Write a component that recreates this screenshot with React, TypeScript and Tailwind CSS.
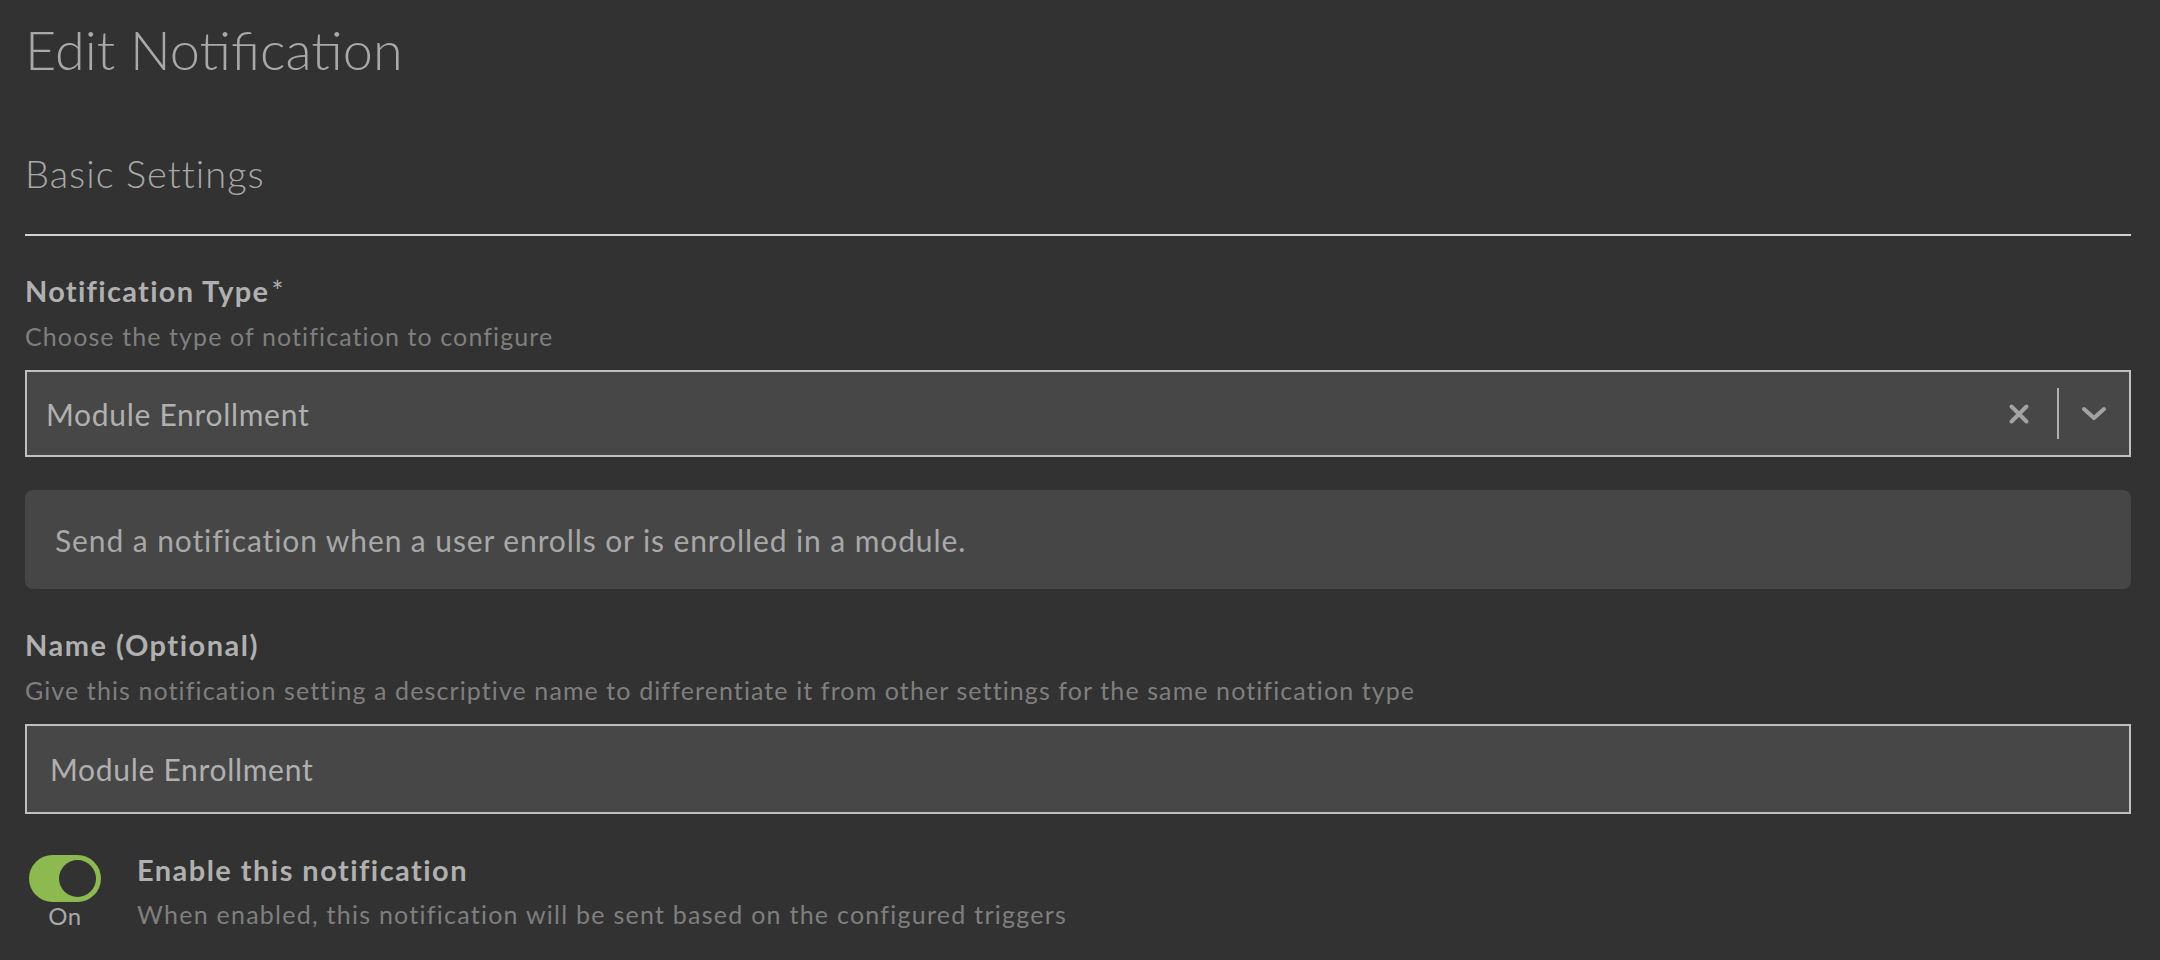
import React, { useState } from 'react'

const font = "font-['Lato','Noto_Sans',sans-serif]"

function ClearIcon() {
  return (
    <svg width="22" height="22" viewBox="0 0 22 22" fill="none">
      <path d="M3.5 3.5L18.5 18.5M18.5 3.5L3.5 18.5" stroke="#a3a3a3" strokeWidth="4" strokeLinecap="round" />
    </svg>
  )
}

function ChevronIcon() {
  return (
    <svg width="26" height="16" viewBox="0 0 26 16" fill="none">
      <path d="M3 3L13 12L23 3" stroke="#a3a3a3" strokeWidth="4" strokeLinecap="round" strokeLinejoin="round" />
    </svg>
  )
}

export default function App() {
  const [enabled, setEnabled] = useState(true)
  const [name, setName] = useState('Module Enrollment')

  return (
    <div className={`min-h-screen h-[960px] bg-[#323232] pl-[25px] pr-[29px] ${font}`}>
      {/* header */}
      <h1 className="pt-[23px] text-[54px] leading-[54px] font-light text-[#a8a8a8]">Edit Notification</h1>

      <h2 className="mt-[77px] text-[38px] leading-[38px] font-light tracking-[1px] text-[#a8a8a8]">Basic Settings</h2>
      <div className="mt-[42px] h-[2px] bg-[#d2d2d2]" />

      {/* notification type */}
      <div className="mt-[40px] text-[29px] leading-[29px] font-bold tracking-[1.3px] text-[#b0b0b0]">
        Notification Type<span className="ml-[2px] font-normal">*</span>
      </div>
      <div className="mt-[19px] text-[25px] leading-[25px] tracking-[1.1px] text-[#7f7f7f]">
        Choose the type of notification to configure
      </div>
      <div className="mt-[21px] h-[87px] flex items-center border-2 border-[#c0c0c0] bg-[#474747] pl-[19px]">
        <span className="flex-1 text-[30px] leading-[30px] tracking-[0.7px] text-[#b0b0b0]">Module Enrollment</span>
        <button className="w-[76px] h-full flex items-center justify-center">
          <ClearIcon />
        </button>
        <div className="w-[2px] h-[51px] bg-[#b0b0b0]" />
        <button className="w-[70px] h-full flex items-center justify-center">
          <ChevronIcon />
        </button>
      </div>

      <div className="mt-[33px] h-[99px] flex items-center rounded-lg bg-[#464646] pl-[30px] text-[30px] leading-[30px] tracking-[0.9px] text-[#a8a8a8]">
        Send a notification when a user enrolls or is enrolled in a module.
      </div>

      {/* name */}
      <div className="mt-[41px] text-[29px] leading-[29px] font-bold tracking-[1.5px] text-[#b0b0b0]">Name (Optional)</div>
      <div className="mt-[19px] text-[25px] leading-[25px] tracking-[1.1px] text-[#7f7f7f]">
        Give this notification setting a descriptive name to differentiate it from other settings for the same notification type
      </div>
      <input
        value={name}
        onChange={(e) => setName(e.target.value)}
        className="mt-[21px] block w-full h-[90px] border-2 border-[#c0c0c0] bg-[#474747] pl-[23px] text-[30px] tracking-[0.7px] text-[#b0b0b0] outline-none"
      />

      {/* enable toggle */}
      <div className="mt-[41px] flex">
        <div className="w-[80px] flex flex-col items-center">
          <button
            onClick={() => setEnabled(!enabled)}
            className={`w-[72px] h-[47px] rounded-full p-[5px] flex ${enabled ? 'bg-[#8cba51] justify-end' : 'bg-[#666] justify-start'}`}
          >
            <span className="w-[37px] h-[37px] rounded-full bg-[#323232]" />
          </button>
          <span className="mt-[2px] text-[24px] leading-[24px] tracking-[0.5px] text-[#a8a8a8]">{enabled ? 'On' : 'Off'}</span>
        </div>
        <div className="ml-[32px]">
          <div className="text-[29px] leading-[29px] font-bold tracking-[1.45px] text-[#b0b0b0]">Enable this notification</div>
          <div className="mt-[18px] text-[25px] leading-[25px] tracking-[1.25px] text-[#7f7f7f]">
            When enabled, this notification will be sent based on the configured triggers
          </div>
        </div>
      </div>
    </div>
  )
}
